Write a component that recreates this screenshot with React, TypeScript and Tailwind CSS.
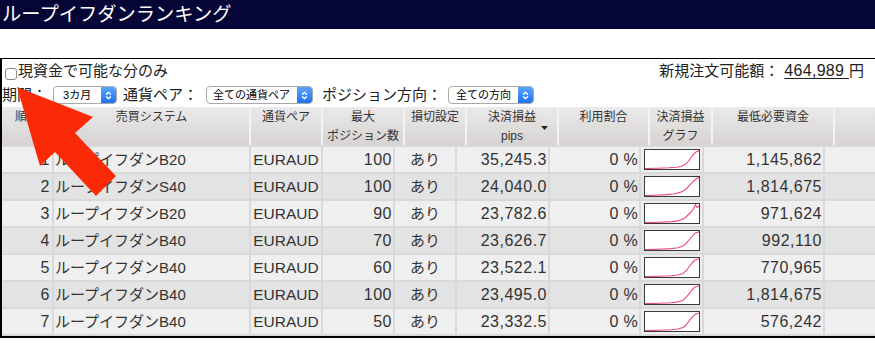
import React from "react";

type Row = {
  n: number;
  name: string;
  max: string;
  pips: string;
  min: string;
  g: string;
};

const rows: Row[] = [
  { n: 1, name: "ループイフダンB20", max: "100", pips: "35,245.3", min: "1,145,862", g: "M0,18.6 L12,18.2 L24,17.8 L32,17.2 L37,16.2 L41,13.8 L44,10.5 L46,7.5 L48,5 L51,2 L54,0.6" },
  { n: 2, name: "ループイフダンS40", max: "100", pips: "24,040.0", min: "1,814,675", g: "M0,18.6 L10,18.2 L22,17.6 L30,16.8 L35,15.4 L39,13.6 L42,11 L45,7.8 L48,4.5 L51,1.8 L54,0.6" },
  { n: 3, name: "ループイフダンB20", max: "90", pips: "23,782.6", min: "971,624", g: "M0,18.6 L14,18.2 L27,17.6 L34,16.6 L40,14 L44,10 L47,7 L49,4 L50.5,0.5 L52,3.5 L53,3 L54,1.5" },
  { n: 4, name: "ループイフダンB40", max: "70", pips: "23,626.7", min: "992,110", g: "M0,18.6 L14,18.2 L26,17.6 L33,16.8 L38,15 L41,12.6 L44,9 L47,5.5 L50,2.2 L54,0.8" },
  { n: 5, name: "ループイフダンB40", max: "60", pips: "23,522.1", min: "770,965", g: "M0,18.6 L14,18.3 L26,17.8 L33,17 L38,15.4 L41,12.8 L44,9 L47,5 L50,2 L54,0.8" },
  { n: 6, name: "ループイフダンB40", max: "100", pips: "23,495.0", min: "1,814,675", g: "M0,18.6 L14,18.2 L26,17.7 L33,16.9 L38,15.2 L41,12.5 L44,8.8 L47,5 L50,2 L54,0.8" },
  { n: 7, name: "ループイフダンB40", max: "50", pips: "23,332.5", min: "576,242", g: "M0,18.6 L14,18.3 L26,17.8 L33,17 L38,15.5 L41,13 L44,9.2 L47,5.4 L50,2.4 L54,1" },
];

function Sel({ w, label, pl }: { w: string; label: string; pl: string }) {
  return (
    <div className={`${w} h-[18px] flex items-stretch rounded-[4px] border border-[#a9a9a9] bg-white overflow-hidden`}>
      <span className={`${pl} flex-1 text-[11px] leading-[17px] text-black whitespace-nowrap`}>{label}</span>
      <span className="w-[15px] bg-gradient-to-b from-[#5ba3fb] to-[#1d72f0] flex items-center justify-center">
        <svg width="7" height="11" viewBox="0 0 7 11" fill="none" stroke="white" strokeWidth="1.3" strokeLinecap="round" strokeLinejoin="round">
          <path d="M1.5 4.2 L3.5 2.2 L5.5 4.2" />
          <path d="M1.5 6.8 L3.5 8.8 L5.5 6.8" />
        </svg>
      </span>
    </div>
  );
}

function H({ w, children }: { w: string; children: React.ReactNode }) {
  return (
    <div className={`${w} relative bg-gradient-to-b from-[#ebe9e9] to-[#d7d3d3] text-center text-[12px] leading-[19px] pt-[1px] text-[#333] whitespace-nowrap`}>
      {children}
    </div>
  );
}

export default function App() {
  return (
    <div className="relative w-[875px] h-[347px] bg-white overflow-hidden font-['Liberation_Sans','Noto_Sans_CJK_JP',sans-serif] text-[#333]">
      <div className="h-[29px] bg-[#050536] text-white text-[19.3px] leading-[30px] pl-[2px] whitespace-nowrap">
        ループイフダンランキング
      </div>
      <div className="h-[29px]" />
      <div className="border-t border-l-2 border-b-2 border-black w-[880px]">
        <div className="h-[24px] flex items-center justify-between text-[15px] text-[#222] pr-[16px]">
          <div className="flex items-center">
            <span className="ml-[3px] mt-[5px] w-[12px] h-[12px] rounded-[3px] border border-[#8a8a8a] bg-white" />
            <span className="ml-[1px]">現資金で可能な分のみ</span>
          </div>
          <div className="flex items-center whitespace-nowrap">
            <span>新規注文可能額：</span>
            <span className="ml-[5px] underline underline-offset-[2px] text-[16px] tracking-[0.3px]">{"464,989\u00a0"}</span>
            <span>円</span>
          </div>
        </div>
        <div className="h-[24px] flex items-center text-[15px] text-[#222] whitespace-nowrap">
          <span>期間：</span>
          <span className="ml-[6px]">
            <Sel w="w-[64px]" pl="pl-[9px]" label="3カ月" />
          </span>
          <span className="ml-[6px]">通貨ペア：</span>
          <span className="ml-[8px]">
            <Sel w="w-[107px]" pl="pl-[6px]" label="全ての通貨ペア" />
          </span>
          <span className="ml-[9px]">ポジション方向：</span>
          <span className="ml-[6px]">
            <Sel w="w-[86px]" pl="pl-[7px]" label="全ての方向" />
          </span>
        </div>
        <div className="flex flex-col gap-[2px] bg-[#d9d9d9] pb-[2px]">
          <div className="flex gap-[2px] bg-[#f3f3f3] h-[38px]">
            <H w="w-[50px]">順位</H>
            <H w="w-[195px]">売買システム</H>
            <H w="w-[70px]">通貨ペア</H>
            <H w="w-[80px]">
              最大
              <br />
              ポジション数
            </H>
            <H w="w-[60px]">損切設定</H>
            <H w="w-[90px]">
              決済損益
              <br />
              pips
              <svg className="absolute right-[9px] top-[19px]" width="7" height="4" viewBox="0 0 7 4">
                <polygon points="0,0 7,0 3.5,4" fill="#222" />
              </svg>
            </H>
            <H w="w-[89px]">利用割合</H>
            <H w="w-[61px]">
              決済損益
              <br />
              グラフ
            </H>
            <H w="w-[120px]">最低必要資金</H>
            <H w="flex-1">{""}</H>
          </div>
          {rows.map((r) => {
            const bg = r.n % 2 === 1 ? "bg-[#efefef]" : "bg-[#e3e3e3]";
            return (
              <div key={r.n} className="flex gap-[2px] h-[25px] leading-[25px] whitespace-nowrap text-[#333]">
                <div className={`${bg} w-[50px] text-right pr-[2px] text-[16px] tracking-[0.5px]`}>{r.n}</div>
                <div className={`${bg} w-[195px] pl-[1px] text-[15px]`}>{r.name}</div>
                <div className={`${bg} w-[70px] text-center text-[15.5px]`}>EURAUD</div>
                <div className={`${bg} w-[70px] text-right pr-[1px] text-[16px] tracking-[0.5px]`}>{r.max}</div>
                <div className={`${bg} w-[60px] text-center text-[15px]`}>あり</div>
                <div className={`${bg} w-[91px] text-right pr-[1px] text-[16px] tracking-[0.5px]`}>{r.pips}</div>
                <div className={`${bg} w-[89px] text-right pr-[1px] text-[16px] tracking-[0.3px]`}>0 %</div>
                <div className={`${bg} w-[61px] flex items-center justify-center`}>
                  <div className="w-[56px] h-[21px] border border-[#3a3a3a] bg-white">
                    <svg width="54" height="19" viewBox="0 0 54 19" fill="none">
                      <path d={r.g} stroke="#ea4a72" strokeWidth="1.1" strokeLinejoin="round" />
                    </svg>
                  </div>
                </div>
                <div className={`${bg} w-[119px] text-right pr-[1px] text-[16px] tracking-[0.5px]`}>{r.min}</div>
                <div className={`${bg} flex-1`} />
              </div>
            );
          })}
        </div>
      </div>
      <svg className="absolute left-0 top-0 pointer-events-none" width="875" height="347" viewBox="0 0 875 347">
        <polygon points="17,87 93,117 75,133 116,176 96,196 55,152 40,166" fill="#fb2a06" />
      </svg>
    </div>
  );
}
